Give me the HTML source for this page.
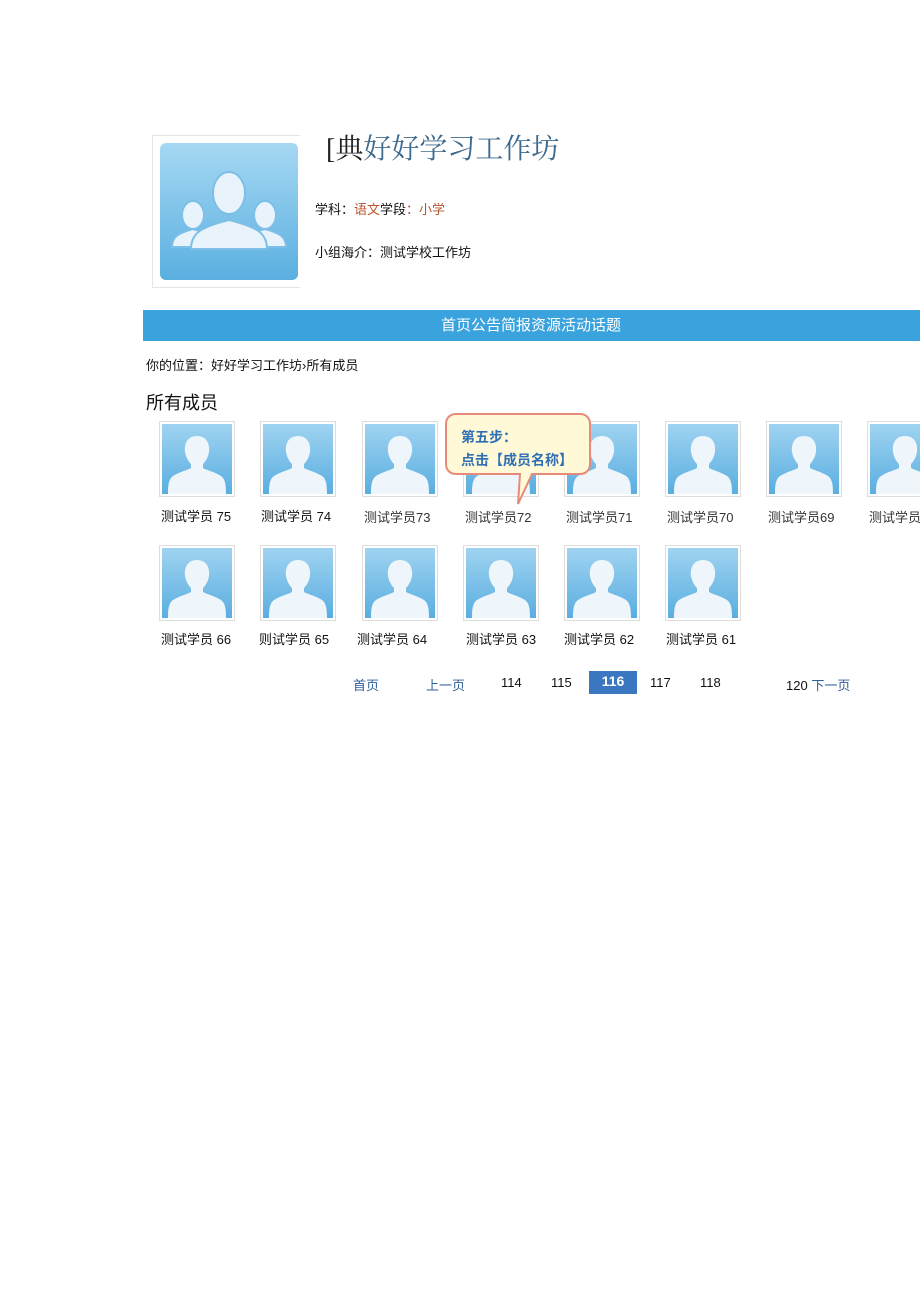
<!DOCTYPE html>
<html><head><meta charset="utf-8"><style>
body{margin:0;width:920px;height:1301px;background:#fff;position:relative;overflow:hidden;font-family:"Liberation Sans","Noto Sans CJK SC",sans-serif;color:#111}
.a{position:absolute;white-space:nowrap}
.av{position:absolute;width:76px;height:76px;border:1px solid #ddd;box-sizing:border-box;background:#fff;padding:2px}
.av svg{display:block}
.nm{position:absolute;font-size:13px;white-space:nowrap}
</style></head><body>
<svg width="0" height="0" style="position:absolute"><defs>
<linearGradient id="g" x1="0" y1="0" x2="0" y2="1"><stop offset="0" stop-color="#9fd3f1"/><stop offset="1" stop-color="#5aaee0"/></linearGradient>
<symbol id="p" viewBox="0 0 70 70"><rect width="70" height="70" fill="url(#g)"/><path d="M35 12c-9 0-13 7-12 16 1 6 4 10 6 12v4c-3 2-12 4-18 8-4 3-5 8-5 18h58c0-10-1-15-5-18-6-4-15-6-18-8v-4c2-2 5-6 6-12 1-9-3-16-12-16z" fill="#eef6fc"/></symbol>
</defs></svg>

<div class="a" style="left:152px;top:135px;width:148px;height:153px;border:1px solid #e5e5e5;border-right:none;box-sizing:border-box"></div>
<div class="a" style="left:160px;top:143px;width:138px;height:137px;border-radius:6px;background:linear-gradient(#a6d8f3,#5aafe0)">
<svg width="138" height="137" viewBox="0 0 138 137"><g fill="#e8f3fb" stroke="#7dbfe6" stroke-width="2">
<ellipse cx="33" cy="72" rx="11" ry="14"/>
<path d="M12 104c0-10 6-14 21-18 15 4 21 8 21 18z"/>
<ellipse cx="105" cy="72" rx="11" ry="14"/>
<path d="M84 104c0-10 6-14 21-18 15 4 21 8 21 18z"/>
<ellipse cx="69" cy="50" rx="16" ry="21"/>
<path d="M31 106c0-16 10-22 38-29 28 7 38 13 38 29z"/>
</g></svg></div>

<div class="a" style="left:326px;top:127px;font-size:28px;font-family:'Liberation Serif','Noto Serif CJK SC',serif;color:#222">[典<span style="color:#3d6a8f">好好学习工作坊</span></div>
<div class="a" style="left:315px;top:199px;font-size:13px">学科：<span style="color:#b5542f">语文</span>学段<span style="color:#b5542f">：小学</span></div>
<div class="a" style="left:315px;top:242px;font-size:13px">小组海介：测试学校工作坊</div>

<div class="a" style="left:143px;top:310px;width:777px;height:31px;background:#3aa3de;color:#fff;font-size:15px;line-height:31px;box-sizing:border-box;padding-left:298px">首页公告简报资源活动话题</div>
<div class="a" style="left:146px;top:355px;font-size:13px">你的位置：好好学习工作坊›所有成员</div>
<div class="a" style="left:146px;top:389px;font-size:18px">所有成员</div>

<div class="av" style="left:159px;top:421px"><svg width="70" height="70"><use href="#p"/></svg></div>
<div class="av" style="left:260px;top:421px"><svg width="70" height="70"><use href="#p"/></svg></div>
<div class="av" style="left:362px;top:421px"><svg width="70" height="70"><use href="#p"/></svg></div>
<div class="av" style="left:463px;top:421px"><svg width="70" height="70"><use href="#p"/></svg></div>
<div class="av" style="left:564px;top:421px"><svg width="70" height="70"><use href="#p"/></svg></div>
<div class="av" style="left:665px;top:421px"><svg width="70" height="70"><use href="#p"/></svg></div>
<div class="av" style="left:766px;top:421px"><svg width="70" height="70"><use href="#p"/></svg></div>
<div class="av" style="left:867px;top:421px"><svg width="70" height="70"><use href="#p"/></svg></div>

<svg class="a" style="left:442px;top:412px" width="152" height="95" viewBox="0 0 152 95"><path d="M12 2h126c6 0 10 4 10 10v40c0 6-4 10-10 10h-48l-14 30 2-30h-64c-6 0-10-4-10-10v-40c0-6 4-10 10-10z" fill="#fff9d8" stroke="#e88a7a" stroke-width="2"/></svg>
<div class="a" style="left:461px;top:426px;font-size:14px;font-weight:bold;color:#2f6fb4;line-height:23px">第五步：<br>点击【成员名称】</div>

<div class="nm" style="left:161px;top:506px">测试学员 75</div>
<div class="nm" style="left:261px;top:506px">测试学员 74</div>
<div class="nm" style="left:364px;top:507px;color:#333">测试学员73</div>
<div class="nm" style="left:465px;top:507px;color:#333">测试学员72</div>
<div class="nm" style="left:566px;top:507px;color:#333">测试学员71</div>
<div class="nm" style="left:667px;top:507px;color:#333">测试学员70</div>
<div class="nm" style="left:768px;top:507px;color:#333">测试学员69</div>
<div class="nm" style="left:869px;top:507px;color:#333">测试学员68</div>

<div class="av" style="left:159px;top:545px"><svg width="70" height="70"><use href="#p"/></svg></div>
<div class="av" style="left:260px;top:545px"><svg width="70" height="70"><use href="#p"/></svg></div>
<div class="av" style="left:362px;top:545px"><svg width="70" height="70"><use href="#p"/></svg></div>
<div class="av" style="left:463px;top:545px"><svg width="70" height="70"><use href="#p"/></svg></div>
<div class="av" style="left:564px;top:545px"><svg width="70" height="70"><use href="#p"/></svg></div>
<div class="av" style="left:665px;top:545px"><svg width="70" height="70"><use href="#p"/></svg></div>

<div class="nm" style="left:161px;top:629px">测试学员 66</div>
<div class="nm" style="left:259px;top:629px">则试学员 65</div>
<div class="nm" style="left:357px;top:629px">测试学员 64</div>
<div class="nm" style="left:466px;top:629px">测试学员 63</div>
<div class="nm" style="left:564px;top:629px">测试学员 62</div>
<div class="nm" style="left:666px;top:629px">测试学员 61</div>

<div class="nm" style="left:353px;top:675px;color:#2f5f99">首页</div>
<div class="nm" style="left:426px;top:675px;color:#2f5f99">上一页</div>
<div class="nm" style="left:501px;top:675px">114</div>
<div class="nm" style="left:551px;top:675px">115</div>
<div class="a" style="left:589px;top:671px;width:48px;height:23px;background:#3a77c0;color:#fff;font-weight:bold;font-size:14px;text-align:center;line-height:21px">116</div>
<div class="nm" style="left:650px;top:675px">117</div>
<div class="nm" style="left:700px;top:675px">118</div>
<div class="nm" style="left:786px;top:675px">120 <span style="color:#2f5f99">下一页</span></div>
</body></html>
